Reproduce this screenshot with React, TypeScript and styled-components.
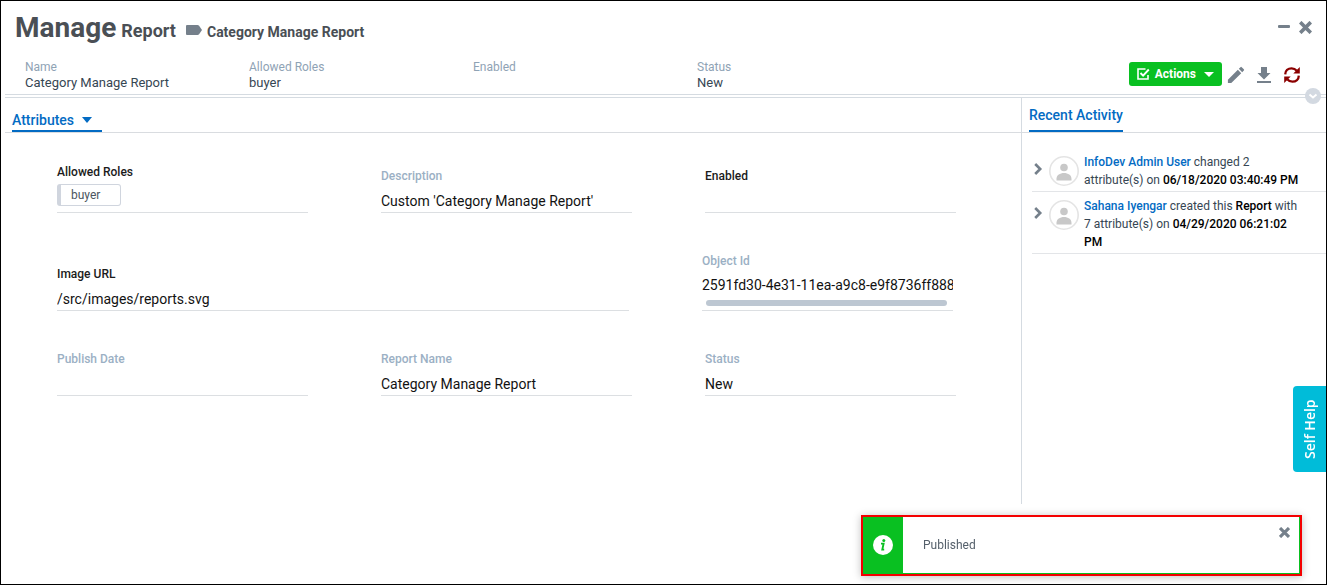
import React from "react";
import styled, { createGlobalStyle } from "styled-components";

const GlobalStyle = createGlobalStyle`
  *, *::before, *::after { box-sizing: border-box; }
  body {
    margin: 0;
    background: #fff;
    color: #212121;
    font-family: Roboto, "Liberation Sans", sans-serif;
    font-size: 12px;
  }
  button, input { font: inherit; color: inherit; }
`;

const Page = styled.div`
  min-height: 100vh;
  display: flex;
  flex-direction: column;
  border: 1px solid #000;
  padding-left: 4px;
`;

const Header = styled.header`
  position: relative;
  border-bottom: 1px solid #d5dbe1;
`;

const TitleRow = styled.div`
  display: flex;
  justify-content: space-between;
  align-items: flex-start;
  height: 56px;
  padding: 9px 14px 0 10px;
`;

const Title = styled.h1`
  display: flex;
  align-items: baseline;
  margin: 0;
  color: #4a4f55;
  font-size: 28px;
  line-height: 36px;
  font-weight: 700;
`;

const TitleType = styled.span`
  margin-left: 5px;
  font-size: 18px;
`;

const TitleName = styled.span`
  margin-left: 5px;
  font-size: 14px;
`;

const TagIcon = styled.svg`
  margin-left: 10px;
  align-self: center;
`;

const WindowButtons = styled.div`
  display: flex;
  gap: 9px;
  padding-top: 11px;
`;

const IconButton = styled.button<{ $color?: string }>`
  display: flex;
  padding: 0;
  border: 0;
  background: none;
  color: ${(p) => p.$color ?? "#75808b"};
  cursor: pointer;
`;

const SummaryRow = styled.div`
  display: flex;
  justify-content: space-between;
  height: 37px;
  padding: 2px 26px 0 20px;
`;

const Summary = styled.dl`
  display: flex;
  margin: 0;
`;

const SummaryItem = styled.div`
  width: 224px;
  line-height: 16px;
`;

const SummaryLabel = styled.dt`
  color: #8fa3b5;
`;

const SummaryValue = styled.dd`
  margin: 0;
  color: #364653;
  font-size: 13px;
`;

const Toolbar = styled.div`
  display: flex;
  align-items: center;
  gap: 5px;
  height: 30px;
`;

const ToolButton = styled(IconButton)`
  padding-top: 2px;
`;

const ActionsButton = styled.button`
  display: flex;
  align-items: center;
  gap: 5px;
  height: 24px;
  padding: 0 8px;
  border: 0;
  border-radius: 3px;
  background: #09c021;
  color: #fff;
  font-weight: 700;
  cursor: pointer;
`;

const Caret = styled.span<{ $space: number }>`
  margin-left: ${(p) => p.$space}px;
  border: 5px solid transparent;
  border-top-color: currentColor;
  border-bottom: 0;
`;

const TabCaret = styled(Caret)`
  border-top-width: 6px;
`;

const Expander = styled.button`
  position: absolute;
  right: 5px;
  bottom: -10px;
  z-index: 1;
  display: flex;
  padding: 0;
  border: 0;
  border-radius: 50%;
  background: #d3d9e1;
`;

const Body = styled.div`
  flex: 1;
  display: flex;
  margin: 2px 0 80px;
  border-top: 1px solid #d5dbe1;
`;

const Main = styled.main`
  flex: 1;
  min-width: 0;
`;

const TabBar = styled.div`
  display: flex;
  align-items: flex-end;
  height: 35px;
  padding: 0 7px;
  border-bottom: 1px solid #d9dce0;
`;

const Tab = styled.button`
  display: flex;
  align-items: center;
  height: 100%;
  padding: 2px 0 0;
  border: 0;
  border-bottom: 2px solid #036bc3;
  background: none;
  color: #036bc3;
  font-size: 14px;
  font-weight: 500;
  cursor: pointer;
`;

const AttributeTab = styled(Tab)`
  padding: 12px 10px 0 0;
`;

const Form = styled.form`
  padding: 0 65px 0 52px;
`;

const FormRow = styled.div<{ $columns: string; $height: number; $inset?: number }>`
  display: grid;
  grid-template-columns: ${(p) => p.$columns};
  column-gap: 73px;
  align-items: end;
  height: ${(p) => p.$height}px;
  padding-right: ${(p) => p.$inset ?? 0}px;
`;

const Field = styled.div<{ $gap?: number }>`
  display: flex;
  flex-direction: column;
  gap: ${(p) => p.$gap ?? 5}px;
  min-width: 0;
  border-bottom: 1px solid #dcdfe2;
`;

const FieldLabel = styled.label<{ $editable?: boolean }>`
  color: ${(p) => (p.$editable ? "#1b1b1b" : "#9bb0c4")};
  line-height: 18px;
  font-weight: 500;
`;

const FieldInput = styled.input`
  width: 100%;
  height: 22px;
  padding: 0;
  border: 0;
  outline: 0;
  background: none;
  color: #121212;
  font-size: 14px;
`;

const Chip = styled.output`
  align-self: flex-start;
  margin-bottom: 6px;
  padding: 0 20px 0 10px;
  border: 1px solid #d0d5de;
  border-left-width: 4px;
  border-radius: 3px;
  color: #4c5660;
  line-height: 20px;
`;

const ScrollThumb = styled.div`
  height: 6px;
  margin: 0 6px 4px 4px;
  border-radius: 3px;
  background: #bdc7d2;
`;

const Side = styled.aside`
  width: 305px;
  border-left: 1px solid #d5dbe1;
`;

const Activities = styled.ul`
  margin: 16px 0 0 10px;
  padding: 0;
  list-style: none;
`;

const Activity = styled.li`
  display: flex;
  align-items: flex-start;
  padding: 4px 24px 2px 0;
  border-bottom: 1px solid #e3e5e8;

  & + & { padding-top: 5px; }
`;

const Avatar = styled.svg`
  flex: none;
  margin: 3px 5px 0 5px;
`;

const ExpandButton = styled(IconButton)`
  margin-top: 10px;
`;

const ActivityText = styled.p`
  margin: 0;
  color: #364653;
  line-height: 18px;

  b { color: #000; font-weight: 500; }
`;

const UserLink = styled.a`
  color: #036bc3;
  font-weight: 500;
  text-decoration: none;
`;

const SelfHelp = styled.button`
  position: fixed;
  right: 1px;
  top: 386px;
  width: 33px;
  height: 86px;
  padding: 0;
  border: 0;
  border-radius: 0 4px 4px 0;
  background: #00bcd9;
  color: #fff;
  font-family: "Open Sans", sans-serif;
  font-size: 14px;
  font-weight: 600;
  writing-mode: vertical-rl;
  transform: rotate(180deg);
  cursor: pointer;
`;

const Toast = styled.div`
  position: fixed;
  right: 25px;
  bottom: 9px;
  display: flex;
  width: 441px;
  height: 61px;
  border: 2px solid #f40000;
  box-shadow: 0 1px 8px rgba(0, 0, 0, 0.25);
  background: #fff;
`;

const ToastIcon = styled.div`
  display: flex;
  align-items: center;
  justify-content: center;
  width: 40px;
  padding-bottom: 1px;
  background: #09c021;
`;

const ToastBody = styled.div`
  flex: 1;
  display: flex;
  align-items: flex-start;
  justify-content: space-between;
  padding: 10px 9px 0 20px;
  border: solid #09c021;
  border-width: 0 1px 1px 0;
  color: #55606b;
`;

const ToastText = styled.span`
  padding-top: 9px;
  line-height: 18px;
`;

const Cross = ({ size }: { size: number }) => (
  <svg width={size} height={size} viewBox="0 0 12 12" aria-hidden="true">
    <path d="M2.300 2.300l7.400 7.400M9.700 2.300l-7.400 7.400" stroke="currentColor" strokeWidth="3.400" strokeLinecap="square" strokeLinejoin="round" />
  </svg>
);

const PersonAvatar = () => (
  <Avatar width="30" height="30" viewBox="0 0 30 30" aria-hidden="true">
    <circle cx="15" cy="15" r="14.200" fill="#fff" stroke="#e4e4e4" strokeWidth="1.600" />
    <circle cx="15" cy="11.500" r="3.800" fill="#c8c8c8" />
    <path d="M7.500 24.500v-1.800c0-3.500 3.500-5.700 7.500-5.700s7.500 2.200 7.500 5.700v1.800z" fill="#c8c8c8" />
  </Avatar>
);

const TextField = ({ id, label, value = "", editable }: { id: string; label: string; value?: string; editable?: boolean }) => (
  <Field>
    <FieldLabel htmlFor={id} $editable={editable}>{label}</FieldLabel>
    <FieldInput id={id} type="text" value={value} readOnly />
  </Field>
);

const summary = [
  { label: "Name", value: "Category Manage Report" },
  { label: "Allowed Roles", value: "buyer" },
  { label: "Enabled", value: "" },
  { label: "Status", value: "New" },
];

const ActivityRow = ({ children }: { children: React.ReactNode }) => (
  <Activity>
    <ExpandButton type="button" aria-label="Expand activity">
      <svg width="12" height="12" viewBox="0 0 12 12" aria-hidden="true">
        <path d="M3.200 1l5 5-5 5" fill="none" stroke="currentColor" strokeWidth="2.600" />
      </svg>
    </ExpandButton>
    <PersonAvatar />
    <ActivityText>{children}</ActivityText>
  </Activity>
);

export default function App() {
  return (
    <Page>
      <GlobalStyle />
      <Header>
        <TitleRow>
          <Title>
            Manage
            <TitleType>Report</TitleType>
            <TagIcon width="16" height="10" viewBox="0 0 16 10" aria-hidden="true">
              <path d="M1 0h10.500q1 0 1.600.8L16 5l-2.900 4.200q-.6.8-1.600.8H1q-1 0-1-1V1q0-1 1-1z" fill="#75808b" />
            </TagIcon>
            <TitleName>Category Manage Report</TitleName>
          </Title>
          <WindowButtons>
            <IconButton type="button" aria-label="Minimize">
              <svg width="12" height="12" viewBox="0 0 12 12" aria-hidden="true">
                <rect y="4" width="12" height="3" rx="1" fill="currentColor" />
              </svg>
            </IconButton>
            <IconButton type="button" aria-label="Close"><Cross size={13} /></IconButton>
          </WindowButtons>
        </TitleRow>
        <SummaryRow>
          <Summary>
            {summary.map((item) => (
              <SummaryItem key={item.label}>
                <SummaryLabel>{item.label}</SummaryLabel>
                <SummaryValue>{item.value}</SummaryValue>
              </SummaryItem>
            ))}
          </Summary>
          <Toolbar>
            <ActionsButton type="button">
              <svg width="13" height="12" viewBox="0 0 13 12" fill="none" stroke="#fff" aria-hidden="true">
                <path d="M8.500 1H1v10h10V7" strokeWidth="1.600" />
                <path d="M3.500 5l2.600 2.700L11.800 1.500" strokeWidth="1.900" />
              </svg>
              Actions
              <Caret $space={3} />
            </ActionsButton>
            <ToolButton type="button" aria-label="Edit">
              <svg width="18" height="18" viewBox="2 2 20 20" fill="currentColor" aria-hidden="true">
                <path d="M3 17.250V21h3.750L17.810 9.940l-3.750-3.750L3 17.250zM20.710 7.040a1 1 0 0 0 0-1.410l-2.340-2.340a1 1 0 0 0-1.410 0l-1.830 1.830 3.750 3.750 1.830-1.830z" />
              </svg>
            </ToolButton>
            <ToolButton type="button" aria-label="Download">
              <svg width="29" height="16" viewBox="-7 0 29 16" fill="currentColor" aria-hidden="true">
                <path d="M4 0h6v6h3.500L7 12.500 .5 6H4zM0 14h14v2H0z" />
              </svg>
            </ToolButton>
            <ToolButton type="button" aria-label="Refresh" $color="#8b0000">
              <svg width="16" height="16" viewBox="0 0 16 16" fill="none" aria-hidden="true">
                <path d="M1.200 7.400C1.300 3.600 4 1.300 7.600 1.300c2.200 0 3.800.8 5.200 2.400M14.800 8.600c-.1 3.800-2.800 6.100-6.400 6.100-2.200 0-3.800-.8-5.200-2.400" stroke="currentColor" strokeWidth="2.300" />
                <path d="M15.800 0v6.500H9.300zM.2 16V9.500h6.500z" fill="currentColor" />
              </svg>
            </ToolButton>
          </Toolbar>
        </SummaryRow>
        <Expander type="button" aria-label="Expand header">
          <svg width="16" height="16" viewBox="0 0 16 16" aria-hidden="true">
            <path d="M4.500 6.500L8 9.500l3.500-3" fill="none" stroke="#fff" strokeWidth="2" />
          </svg>
        </Expander>
      </Header>
      <Body>
        <Main>
          <TabBar>
            <AttributeTab type="button">
              Attributes
              <TabCaret $space={8} />
            </AttributeTab>
          </TabBar>
          <Form>
            <FormRow $columns="1fr 1fr 1fr" $height={80}>
              <Field $gap={3}>
                <FieldLabel htmlFor="roles" $editable>Allowed Roles</FieldLabel>
                <Chip id="roles">buyer</Chip>
              </Field>
              <TextField id="description" label="Description" value="Custom 'Category Manage Report'" />
              <TextField id="enabled" label="Enabled" editable />
            </FormRow>
            <FormRow $columns="572fr 251fr" $height={98} $inset={3}>
              <TextField id="image-url" label="Image URL" value="/src/images/reports.svg" editable />
              <Field $gap={4}>
                <FieldLabel htmlFor="object-id">Object Id</FieldLabel>
                <FieldInput id="object-id" type="text" value="2591fd30-4e31-11ea-a9c8-e9f8736ff888" readOnly />
                <ScrollThumb />
              </Field>
            </FormRow>
            <FormRow $columns="1fr 1fr 1fr" $height={85}>
              <TextField id="publish-date" label="Publish Date" />
              <TextField id="report-name" label="Report Name" value="Category Manage Report" />
              <TextField id="status" label="Status" value="New" />
            </FormRow>
          </Form>
        </Main>
        <Side>
          <TabBar>
            <Tab type="button">Recent Activity</Tab>
          </TabBar>
          <Activities>
            <ActivityRow>
              <UserLink href="#admin">InfoDev Admin User</UserLink> changed 2 attribute(s) on <b>06/18/2020 03:40:49 PM</b>
            </ActivityRow>
            <ActivityRow>
              <UserLink href="#sahana">Sahana Iyengar</UserLink> created this <b>Report</b> with 7 attribute(s) on <b>04/29/2020 06:21:02 PM</b>
            </ActivityRow>
          </Activities>
        </Side>
      </Body>
      <SelfHelp type="button">Self Help</SelfHelp>
      <Toast role="status">
        <ToastIcon>
          <svg width="20" height="20" viewBox="0 0 20 20" aria-hidden="true">
            <circle cx="10" cy="10" r="10" fill="#fff" />
            <circle cx="10.800" cy="5.500" r="1.500" fill="#09c021" />
            <path d="M8 8.600h2.600L9.300 14.600h1.900" fill="none" stroke="#09c021" strokeWidth="1.900" />
          </svg>
        </ToastIcon>
        <ToastBody>
          <ToastText>Published</ToastText>
          <IconButton type="button" aria-label="Dismiss"><Cross size={11} /></IconButton>
        </ToastBody>
      </Toast>
    </Page>
  );
}
